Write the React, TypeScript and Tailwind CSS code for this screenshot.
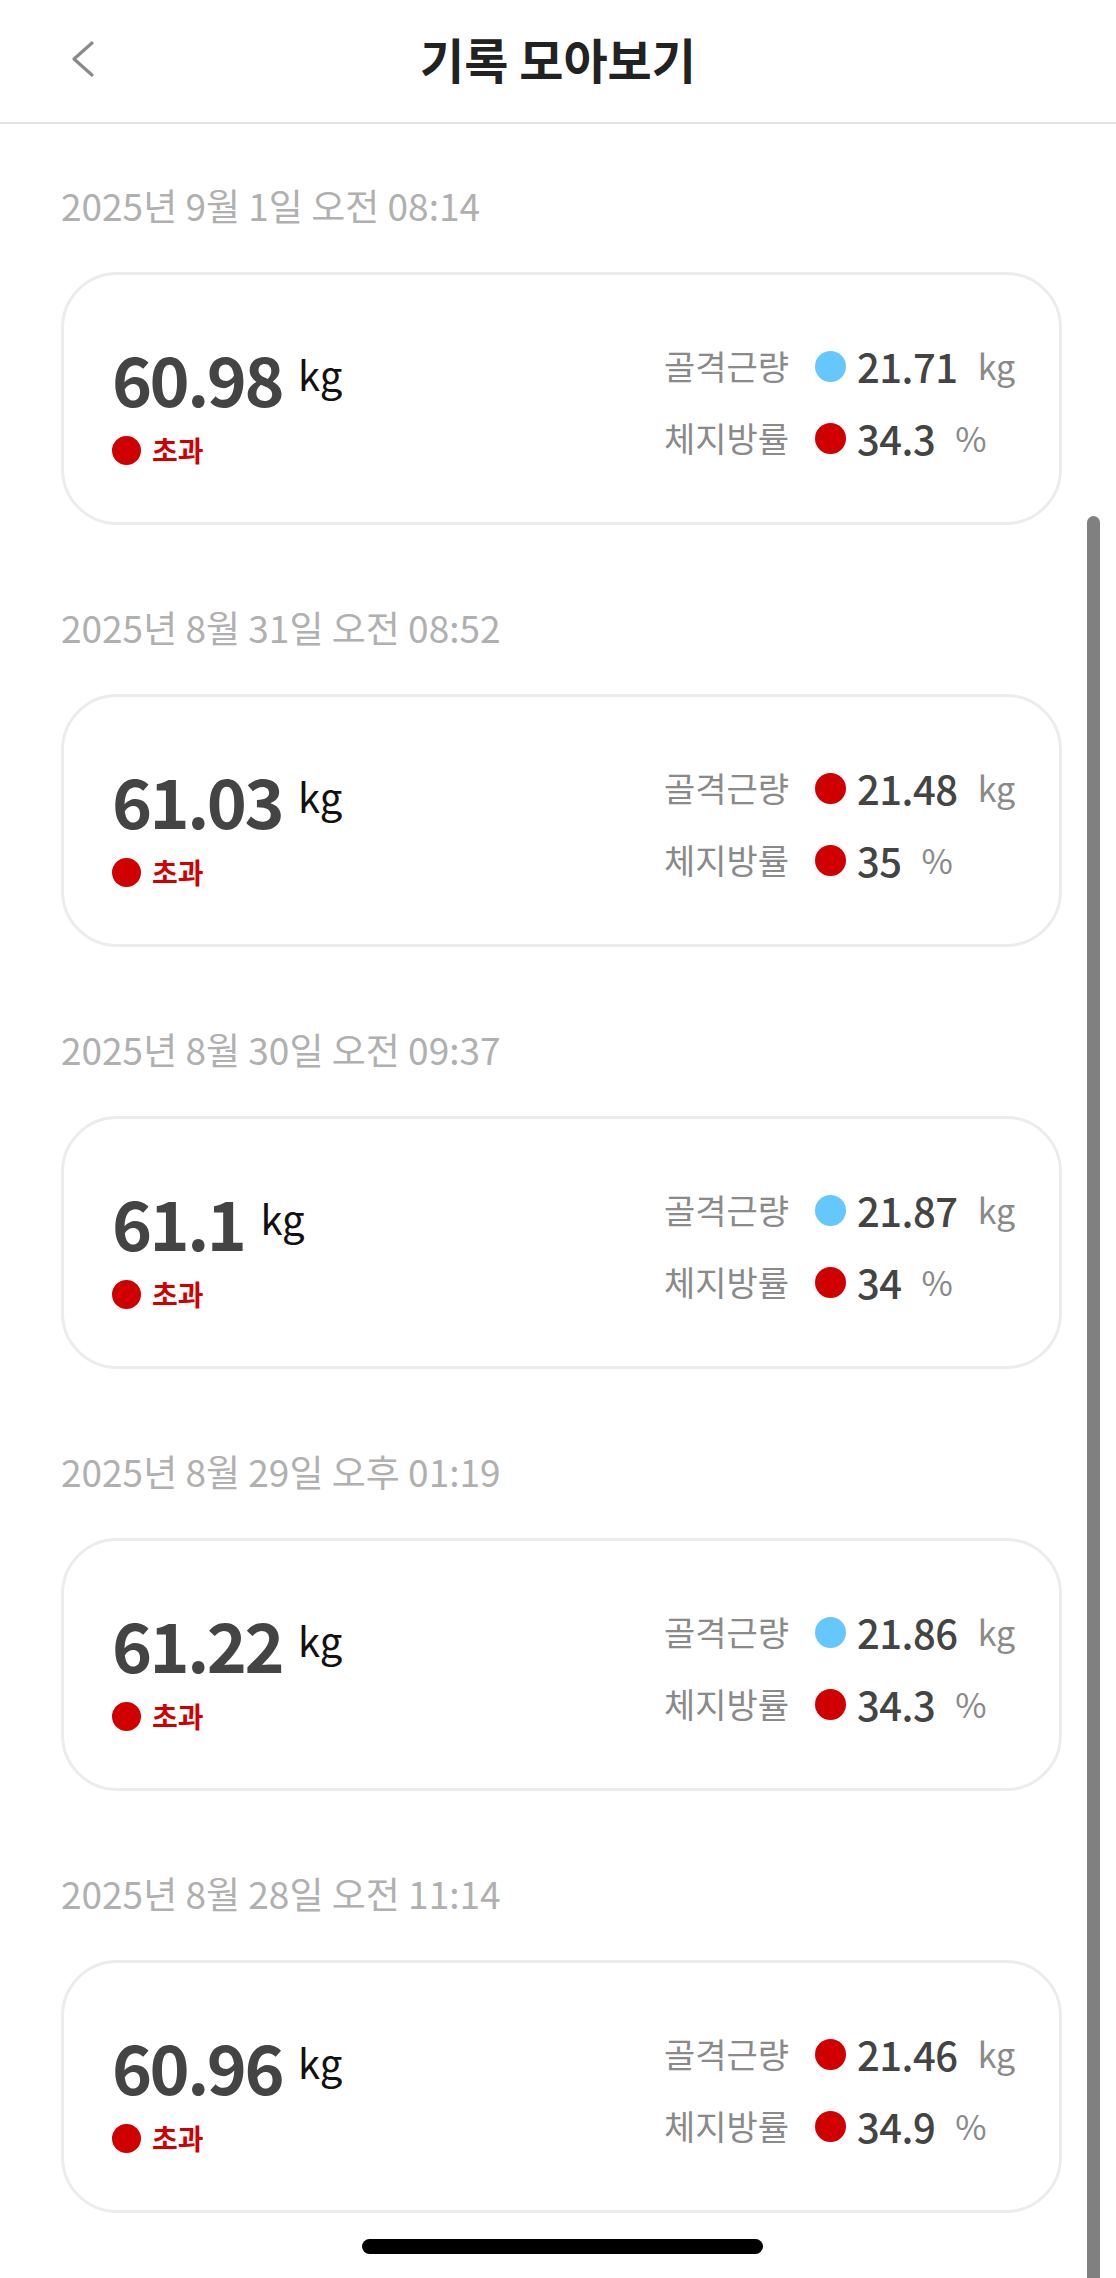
import React from 'react';

const records = [
  { date: '2025년 9월 1일 오전 08:14', weight: '60.98', muscle: '21.71', muscleOk: true, fat: '34.3' },
  { date: '2025년 8월 31일 오전 08:52', weight: '61.03', muscle: '21.48', muscleOk: false, fat: '35' },
  { date: '2025년 8월 30일 오전 09:37', weight: '61.1', muscle: '21.87', muscleOk: true, fat: '34' },
  { date: '2025년 8월 29일 오후 01:19', weight: '61.22', muscle: '21.86', muscleOk: true, fat: '34.3' },
  { date: '2025년 8월 28일 오전 11:14', weight: '60.96', muscle: '21.46', muscleOk: false, fat: '34.9' },
];

const Dot = ({ blue }: { blue?: boolean }) => (
  <span className={`block shrink-0 w-[31px] h-[31px] rounded-full ${blue ? 'bg-[#66c7fd]' : 'bg-[#d10000]'}`} />
);

const App = () => {
  return (
    <div
      className="relative h-[2278px] overflow-hidden bg-white"
      style={{ fontFamily: '"Noto Sans CJK KR", "Noto Sans", sans-serif' }}
    >
      {/* Header */}
      <header className="relative h-[124px] flex items-center justify-center border-b-2 border-[#e4e4e4]">
        <button className="absolute left-[62px] top-[36px] w-[40px] h-[46px] flex items-center justify-center">
          <svg width="26" height="38" viewBox="0 0 26 38" fill="none">
            <path d="M23 3 L5 19 L23 35" stroke="#8a8a8a" strokeWidth="3.2" strokeLinecap="round" strokeLinejoin="round" />
          </svg>
        </button>
        <h1 className="text-[48px] font-bold text-[#222] leading-none -mt-[6px]">기록 모아보기</h1>
      </header>

      {/* List */}
      <div className="flex flex-col gap-[78px] pt-[57px] pl-[61px] pr-[54px]">
        {records.map((r, i) => (
          <div key={i}>
            <p className="text-[37px] leading-[48px] text-[#b0b0b0]">{r.date}</p>
            <div className="mt-[43px] h-[253px] rounded-[56px] border-[3px] border-[#ececec] flex justify-between pl-[48px] pr-[46px]">
              <div className="pt-[68px]">
                <div className="flex items-start">
                  <span className="text-[68px] font-bold leading-[70px] text-[#444] tracking-[-2.5px]">{r.weight}</span>
                  <span className="ml-[16px] mt-[7px] text-[40px] leading-[48px] text-[#111]">kg</span>
                </div>
                <div className="mt-[19px] flex items-center gap-[11px]">
                  <span className="block w-[29px] h-[29px] rounded-full bg-[#d10000]" />
                  <span className="text-[28px] leading-[36px] font-bold text-[#d10000]">초과</span>
                </div>
              </div>
              <div className="pt-[55px] w-[349px] shrink-0">
                {[
                  { label: '골격근량', value: r.muscle, unit: 'kg', blue: r.muscleOk },
                  { label: '체지방률', value: r.fat, unit: '%', blue: false },
                ].map((row) => (
                  <div key={row.label} className="h-[72px] flex items-center">
                    <span className="w-[151px] shrink-0 text-[34px] text-[#8a8a8a] leading-none">{row.label}</span>
                    <Dot blue={row.blue} />
                    <span className="ml-[11px] text-[40px] font-medium text-[#444] leading-none tracking-[-0.5px]">{row.value}</span>
                    <span className="ml-[20px] text-[34px] text-[#8a8a8a] leading-none">{row.unit}</span>
                  </div>
                ))}
              </div>
            </div>
          </div>
        ))}
      </div>

      {/* Scrollbar */}
      <div className="absolute left-[1087px] top-[516px] w-[13px] h-[1770px] rounded-full bg-[#808080]" />

      {/* Home indicator */}
      <div className="absolute left-[362px] top-[2239px] w-[401px] h-[15px] rounded-full bg-black" />
    </div>
  );
};

export default App;
